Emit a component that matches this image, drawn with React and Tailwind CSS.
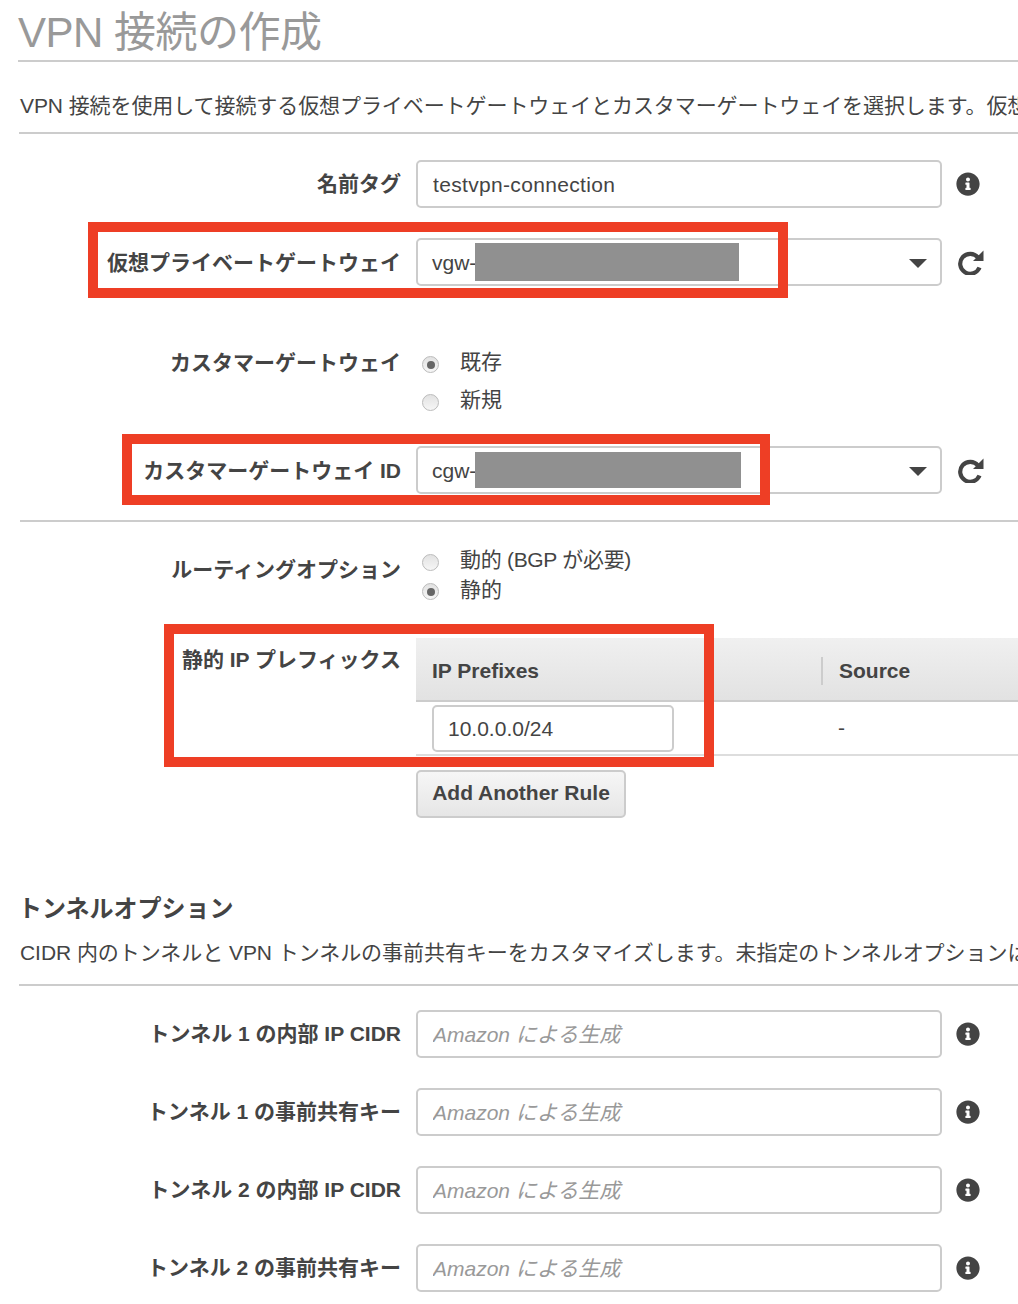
import React from "react";
import { FaInfoCircle } from "react-icons/fa";

const font = "font-['Liberation_Sans','Noto_Sans_CJK_JP',sans-serif]";

function Label({ children }) {
  return (
    <div className="w-[401px] shrink-0 text-right text-[21px] font-bold leading-[30px] text-[#444] whitespace-nowrap">
      {children}
    </div>
  );
}

function Info() {
  return <FaInfoCircle className="ml-[14px] text-[24px] text-[#444]" />;
}

function Refresh() {
  return (
    <svg viewBox="0 0 26 26" className="ml-[16px] -mt-[1px] h-[26px] w-[26px] text-[#444]" fill="none">
      <path d="M20 8.5 A10 10 0 1 0 21.5 18.5" stroke="currentColor" strokeWidth="4.2" />
      <path d="M25.5 1.5 V12 H15 Z" fill="currentColor" />
    </svg>
  );
}

function TextRow({ label, placeholder, value, className = "" }) {
  return (
    <div className={`flex items-center ${className}`}>
      <Label>{label}</Label>
      <input
        readOnly
        defaultValue={value}
        placeholder={placeholder}
        className="ml-[15px] h-[48px] w-[526px] rounded-[5px] border-2 border-[#ccc] bg-white px-[15px] pt-[2px] text-[21px] tracking-[0.33px] text-[#444] outline-none placeholder:italic placeholder:tracking-normal placeholder:text-[#999]"
      />
      <Info />
    </div>
  );
}

function SelectRow({ label, value, className = "" }) {
  return (
    <div className={`flex items-center ${className}`}>
      <div className="pt-[1px]">
        <Label>{label}</Label>
      </div>
      <div className="relative ml-[15px] flex h-[48px] w-[526px] items-center rounded-[5px] border-2 border-[#ccc] bg-white pl-[14px] pt-[2px] text-[21px] text-[#444]">
        {value}
        <div className="absolute right-[13px] top-[19px] h-0 w-0 border-x-[9px] border-t-[9px] border-x-transparent border-t-[#444]" />
      </div>
      <Refresh />
    </div>
  );
}

function Radio({ checked }) {
  return (
    <span className="mt-[3px] flex h-[17px] w-[17px] shrink-0 items-center justify-center rounded-full border border-[#bbb] bg-gradient-to-b from-[#e2e2e2] to-[#f6f6f6]">
      {checked && <span className="h-[8px] w-[8px] rounded-full bg-[#666]" />}
    </span>
  );
}

function RadioItem({ checked, children, className = "", textClass = "" }) {
  return (
    <div className={`flex h-[30px] items-center text-[21px] text-[#444] ${className}`}>
      <Radio checked={checked} />
      <span className={`ml-[21px] whitespace-nowrap ${textClass}`}>{children}</span>
    </div>
  );
}

function Box({ className }) {
  return <div className={`pointer-events-none absolute border-[10px] border-[#ee3e25] ${className}`} />;
}

export default function App() {
  return (
    <div className={`relative h-[1304px] w-[1018px] overflow-hidden bg-white ${font}`}>
      <h1 className="ml-[18px] h-[62px] border-b-2 border-[#ccc] pt-[9px] text-[42px] font-normal leading-[48px] tracking-[-0.5px] text-[#999] whitespace-nowrap">
        VPN 接続の作成
      </h1>
      <p className="ml-[19px] flex h-[72px] items-center border-b-2 border-[#ccc] pl-[1px] pt-[18px] text-[21px] tracking-[-0.08px] text-[#444] whitespace-nowrap">
        VPN 接続を使用して接続する仮想プライベートゲートウェイとカスタマーゲートウェイを選択します。仮想プライベートゲートウェイ
      </p>

      <TextRow className="mt-[26px]" label="名前タグ" value="testvpn-connection" />
      <SelectRow className="mt-[30px]" label="仮想プライベートゲートウェイ" value="vgw-" />

      <div className="mt-[62px] flex">
        <Label>カスタマーゲートウェイ</Label>
        <div className="ml-[21px]">
          <RadioItem checked textClass="-mt-[2px]">既存</RadioItem>
          <RadioItem className="mt-[8px]" textClass="-mt-[2px]">新規</RadioItem>
        </div>
      </div>

      <SelectRow className="mt-[30px]" label="カスタマーゲートウェイ ID" value="cgw-" />

      <div className="ml-[20px] mt-[26px] h-[2px] bg-[#ccc]" />

      <div className="mt-[24px] flex">
        <div className="pt-[9px]">
          <Label>ルーティングオプション</Label>
        </div>
        <div className="ml-[21px]">
          <RadioItem textClass="-mt-[2px] tracking-[-0.3px]">動的 (BGP が必要)</RadioItem>
          <RadioItem className="-mt-[1px]" checked>静的</RadioItem>
        </div>
      </div>

      <div className="mt-[33px] flex">
        <div className="pt-[7px]">
          <Label>静的 IP プレフィックス</Label>
        </div>
        <div className="ml-[15px] w-[602px]">
          <div className="flex h-[64px] items-center border-b-2 border-[#ccc] bg-gradient-to-b from-[#f0f0f0] to-[#e2e2e2] pt-[4px] text-[21px] font-bold text-[#444]">
            <div className="w-[405px] pl-[16px]">IP Prefixes</div>
            <div className="h-[28px] border-l-2 border-[#ccc] pl-[16px] leading-[28px]">Source</div>
          </div>
          <div className="flex h-[54px] items-center border-b-2 border-[#ddd] text-[21px] text-[#444]">
            <div className="w-[422px] pl-[16px]">
              <input
                readOnly
                defaultValue="10.0.0.0/24"
                className="h-[47px] w-[242px] rounded-[5px] border-2 border-[#ccc] bg-white px-[14px] pt-[1px] text-[21px] text-[#444] outline-none"
              />
            </div>
            <div>-</div>
          </div>
          <button className="mt-[14px] flex h-[48px] w-[210px] items-center justify-center rounded-[5px] border-2 border-[#ccc] bg-gradient-to-b from-[#f6f6f6] to-[#e6e6e6] pb-[3px] text-[21px] font-bold text-[#444]">
            Add Another Rule
          </button>
        </div>
      </div>

      <h2 className="ml-[18px] mt-[75px] text-[24px] font-bold leading-[32px] text-[#444]">トンネルオプション</h2>
      <p className="ml-[19px] mt-[13px] h-[48px] border-b-2 border-[#ccc] pl-[1px] text-[21px] leading-[30px] tracking-[-0.05px] text-[#444] whitespace-nowrap">
        CIDR 内のトンネルと VPN トンネルの事前共有キーをカスタマイズします。未指定のトンネルオプションは Amazon が生成します
      </p>

      <TextRow className="mt-[24px]" label="トンネル 1 の内部 IP CIDR" placeholder="Amazon による生成" />
      <TextRow className="mt-[30px]" label="トンネル 1 の事前共有キー" placeholder="Amazon による生成" />
      <TextRow className="mt-[30px]" label="トンネル 2 の内部 IP CIDR" placeholder="Amazon による生成" />
      <TextRow className="mt-[30px]" label="トンネル 2 の事前共有キー" placeholder="Amazon による生成" />

      <div className="absolute left-[475px] top-[243px] h-[38px] w-[264px] bg-[#909090]" />
      <div className="absolute left-[475px] top-[452px] h-[36px] w-[266px] bg-[#909090]" />
      <Box className="left-[88px] top-[222px] h-[76px] w-[700px]" />
      <Box className="left-[122px] top-[434px] h-[71px] w-[648px]" />
      <Box className="left-[164px] top-[624px] h-[143px] w-[550px]" />
    </div>
  );
}
